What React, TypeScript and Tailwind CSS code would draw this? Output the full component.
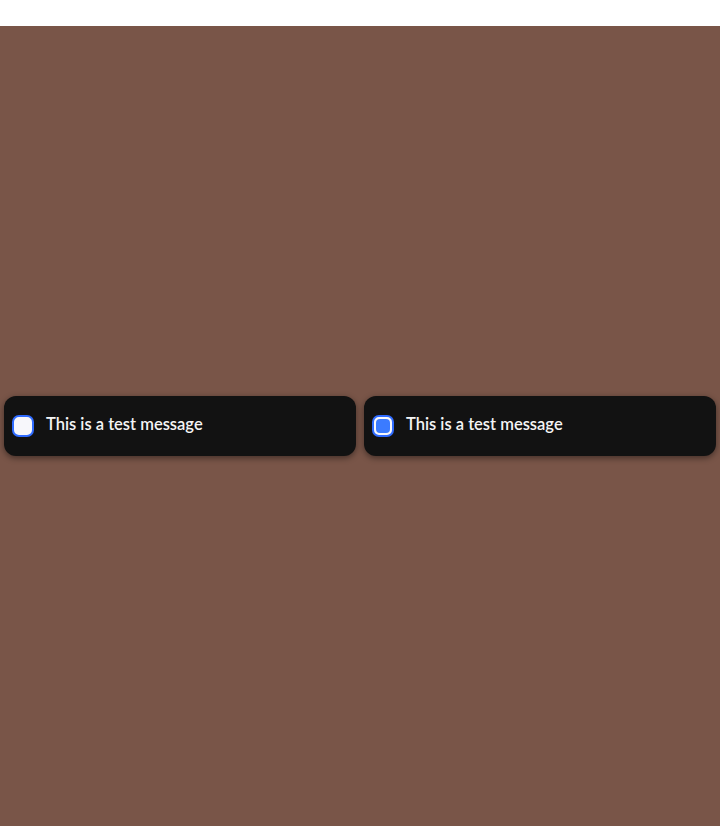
import { useState } from "react";

function Toast({ initialChecked }: { initialChecked: boolean }) {
  const [checked, setChecked] = useState(initialChecked);

  return (
    <div className="flex-1 h-[60px] flex items-center gap-3 px-2 rounded-xl bg-[#121212] shadow-[0_2px_6px_rgba(0,0,0,0.45)]">
      <button
        type="button"
        onClick={() => setChecked((c) => !c)}
        className="w-[22px] h-[22px] shrink-0 rounded-[7px] border-2 border-[#2f6bff] bg-[#f7f7fb] p-[2px]"
      >
        {checked && <span className="block w-full h-full rounded-[4px] bg-[#3b7bff]" />}
      </button>
      <span className="mb-[4px] text-[16.5px] font-semibold text-[#f5f5f5] [font-family:Lato,'Noto_Sans',sans-serif]">
        This is a test message
      </span>
    </div>
  );
}

export default function App() {
  return (
    <div className="min-h-[826px] bg-white flex flex-col">
      <div className="h-[26px] shrink-0" />
      <div className="flex-1 bg-[#795548] flex items-center gap-2 px-1">
        <Toast initialChecked={false} />
        <Toast initialChecked={true} />
      </div>
    </div>
  );
}
